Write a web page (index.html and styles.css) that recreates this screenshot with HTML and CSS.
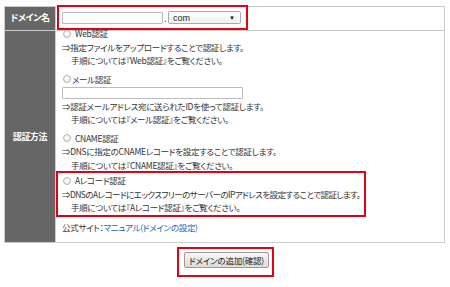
FILE: index.html
```html
<!DOCTYPE html>
<html lang="ja">
<head>
<meta charset="utf-8">
<title>ドメインの追加</title>
<link rel="stylesheet" href="styles.css">
</head>
<body>
<div class="page">
  <table class="form">
    <tr class="row-domain">
      <th>ドメイン名</th>
      <td class="domain-cell">
        <div class="domain-line">
          <span class="text-input domain-input"></span>
          <span class="dot">.</span>
          <span class="select"><span class="sel-text">com</span><span class="sel-arrow">▼</span></span>
        </div>
      </td>
    </tr>
    <tr class="row-method">
      <th>認証方法</th>
      <td class="methods">
        <div class="block first">
          <div class="opt"><span class="radio"></span>Web認証</div>
          <p class="line">⇒指定ファイルをアップロードすることで認証します。</p>
          <p class="line ind">手順については『Web認証』をご覧ください。</p>
        </div>
        <div class="block">
          <div class="opt tight"><span class="radio"></span>メール認証</div>
          <div class="input-row"><span class="text-input mail-input"></span></div>
          <p class="line">⇒認証メールアドレス宛に送られたIDを使って認証します。</p>
          <p class="line ind">手順については『メール認証』をご覧ください。</p>
        </div>
        <div class="block">
          <div class="opt"><span class="radio"></span>CNAME認証</div>
          <p class="line">⇒DNSに指定のCNAMEレコードを設定することで認証します。</p>
          <p class="line ind">手順については『CNAME認証』をご覧ください。</p>
        </div>
        <div class="block last">
          <div class="opt"><span class="radio"></span>Aレコード認証</div>
          <p class="line long">⇒DNSのAレコードにエックスフリーのサーバーのIPアドレスを設定することで認証します。</p>
          <p class="line ind">手順については『Aレコード認証』をご覧ください。</p>
        </div>
        <p class="line site">公式サイト：<a class="link" href="#">マニュアル(ドメインの設定)</a></p>
      </td>
    </tr>
  </table>
  <div class="actions">
    <button class="btn" type="button">ドメインの追加(確認)</button>
  </div>
  <div class="mark mark-domain"></div>
  <div class="mark mark-arecord"></div>
  <div class="mark mark-button"></div>
</div>
</body>
</html>
```
FILE: styles.css
```css
html, body {
  margin: 0;
  padding: 0;
  background: #fff;
}
body {
  font-family: "Noto Sans CJK JP", "Noto Sans", sans-serif;
  font-size: 8.5px;
  letter-spacing: -0.3px;
  color: #333;
  font-feature-settings: "palt";
}
.page {
  position: relative;
  width: 450px;
  height: 287px;
  padding: 6px 0 0 4px;
  box-sizing: border-box;
}
.form {
  width: 441px;
  border-collapse: collapse;
  table-layout: fixed;
}
.form th {
  width: 50px;
  background: #666;
  color: #fff;
  font-weight: bold;
  font-size: 9px;
  letter-spacing: -0.4px;
  border: 1px solid #ccc;
  padding: 0;
  text-align: center;
  vertical-align: middle;
}
.form td {
  border: 1px solid #ccc;
  padding: 0 6px;
  vertical-align: top;
}
.row-domain th,
.row-domain td {
  height: 20px;
}
.row-domain th {
  padding-bottom: 3px;
}
.domain-cell {
  vertical-align: middle !important;
}
.domain-line {
  display: flex;
  align-items: center;
  height: 20px;
  margin-top: -2px;
}
.text-input {
  display: block;
  box-sizing: border-box;
  height: 12px;
  background: #fff;
  border: 1px solid #bbb;
  border-radius: 1px;
}
.domain-input {
  width: 101px;
}
.dot {
  width: 5px;
  text-align: center;
  line-height: 12px;
  color: #555;
  letter-spacing: 0;
}
.select {
  display: flex;
  align-items: center;
  justify-content: space-between;
  box-sizing: border-box;
  width: 73px;
  height: 13px;
  padding: 0 5px 0 4px;
  border: 1px solid #aaa;
  border-radius: 2px;
  background: linear-gradient(#fff, #f1f1f1);
  font-family: "Liberation Sans", Arial, sans-serif;
  font-size: 9px;
  letter-spacing: 0;
  color: #222;
}
.sel-arrow {
  font-size: 6px;
  color: #111;
}
.methods {
  padding: 0 6px 8px 6px !important;
  line-height: 13.5px;
}
.block {
  margin-bottom: 5px;
}
.block.first {
  margin-top: -4px;
}
.block.last {
  margin-top: -3px;
}
.opt {
  display: flex;
  align-items: center;
  height: 13.5px;
  padding-left: 1px;
}
.radio {
  display: inline-block;
  width: 8px;
  height: 8px;
  box-sizing: border-box;
  border: 1px solid #b5b5b5;
  border-radius: 50%;
  background: radial-gradient(circle at 50% 40%, #fff 0%, #e6e6e6 100%);
  margin-right: 4px;
}
.opt.tight .radio {
  margin-right: 1px;
}
.line {
  margin: 0;
  height: 13.5px;
  white-space: nowrap;
}
.line.long {
  letter-spacing: -0.55px;
}
.ind {
  padding-left: 9px;
}
.input-row {
  display: flex;
  align-items: center;
  height: 13.5px;
}
.mail-input {
  width: 181px;
}
.site {
  margin-top: 6px;
}
.link {
  color: #1f5fc4;
  text-decoration: none;
}
.actions {
  display: flex;
  justify-content: center;
  padding-top: 9px;
  padding-right: 1px;
}
.btn {
  box-sizing: border-box;
  width: 85px;
  height: 16px;
  padding: 0;
  border: 1px solid #9a9a9a;
  border-radius: 2px;
  background: linear-gradient(#f6f6f6, #dcdcdc);
  font-family: "Noto Sans CJK JP", sans-serif;
  font-size: 8.5px;
  letter-spacing: -0.2px;
  font-feature-settings: "palt";
  color: #222;
  line-height: 14px;
}
.mark {
  position: absolute;
  box-sizing: border-box;
  border: 2px solid #e60012;
  pointer-events: none;
}
.mark-domain {
  left: 57px;
  top: 5px;
  width: 191px;
  height: 25px;
}
.mark-arecord {
  left: 56px;
  top: 171px;
  width: 310px;
  height: 46px;
}
.mark-button {
  left: 177px;
  top: 247px;
  width: 97px;
  height: 30px;
}
```
